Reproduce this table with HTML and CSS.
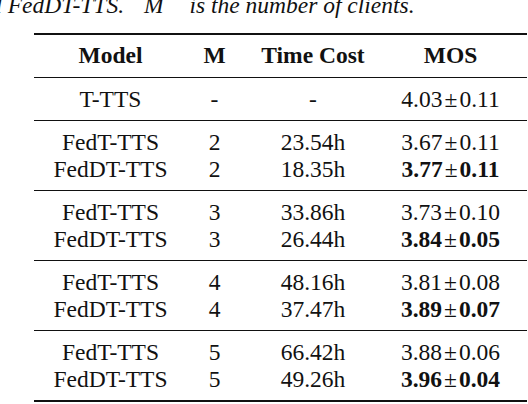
FILE: index.html
```html
<!DOCTYPE html>
<html lang="en">
<head>
  <meta charset="UTF-8">
  <title>Table</title>
  <link rel="stylesheet" href="styles.css">
</head>
<body>
  <div class="caption">d FedDT-TTS. <span class="gap-a">M</span> <span class="gap-b">is the number of clients.</span></div>
  <table class="results">
    <thead>
      <tr><th class="c-model">Model</th><th class="c-m">M</th><th class="c-time">Time Cost</th><th class="c-mos">MOS</th></tr>
    </thead>
    <tbody>
      <tr><td>T-TTS</td><td>-</td><td>-</td><td class="c-mos">4.03<span class="pm">±</span>0.11</td></tr>
    </tbody>
    <tbody>
      <tr><td>FedT-TTS</td><td>2</td><td>23.54h</td><td class="c-mos">3.67<span class="pm">±</span>0.11</td></tr>
      <tr><td>FedDT-TTS</td><td>2</td><td>18.35h</td><td class="c-mos best">3.77<span class="pm">±</span>0.11</td></tr>
    </tbody>
    <tbody>
      <tr><td>FedT-TTS</td><td>3</td><td>33.86h</td><td class="c-mos">3.73<span class="pm">±</span>0.10</td></tr>
      <tr><td>FedDT-TTS</td><td>3</td><td>26.44h</td><td class="c-mos best">3.84<span class="pm">±</span>0.05</td></tr>
    </tbody>
    <tbody>
      <tr><td>FedT-TTS</td><td>4</td><td>48.16h</td><td class="c-mos">3.81<span class="pm">±</span>0.08</td></tr>
      <tr><td>FedDT-TTS</td><td>4</td><td>37.47h</td><td class="c-mos best">3.89<span class="pm">±</span>0.07</td></tr>
    </tbody>
    <tbody>
      <tr><td>FedT-TTS</td><td>5</td><td>66.42h</td><td class="c-mos">3.88<span class="pm">±</span>0.06</td></tr>
      <tr><td>FedDT-TTS</td><td>5</td><td>49.26h</td><td class="c-mos best">3.96<span class="pm">±</span>0.04</td></tr>
    </tbody>
  </table>
</body>
</html>
```

FILE: styles.css
```css
html, body {
  margin: 0; padding: 0;
  background: #fff;
  color: #111;
  font-family: "Liberation Serif", "Times New Roman", serif;
  font-size: 23.5px;
  overflow: hidden;
}
.caption {
  font-style: italic;
  line-height: 28px;
  margin-top: -9px;
  text-indent: -10px;
  white-space: nowrap;
}
/* the quote marks around M sit above the crop, only the gaps show */
.caption .gap-a { margin-left: 14px; }
.caption .gap-b { margin-left: 20px; }
.results {
  margin: 14px 0 0 34px;
  width: 493px;
  border-collapse: collapse;
  border-top: 2px solid #111;
  border-bottom: 2px solid #111;
  table-layout: fixed;
}
.results th, .results td {
  padding: 0;
  line-height: 27px;
  text-align: center;
  white-space: nowrap;
}
.results thead th { padding: 7px 0 8px 0; }
.results tbody { border-top: 1px solid #111; }
.results tbody tr:first-child td { padding-top: 8px; }
.results tbody tr:last-child td { padding-bottom: 7px; }
.c-model { width: 153px; }
.c-m { width: 55px; }
.c-time { width: 142px; }
.results .c-mos { padding-right: 10px; }
.best { font-weight: bold; }
.pm { font-weight: normal; padding: 0 2px; }
```
